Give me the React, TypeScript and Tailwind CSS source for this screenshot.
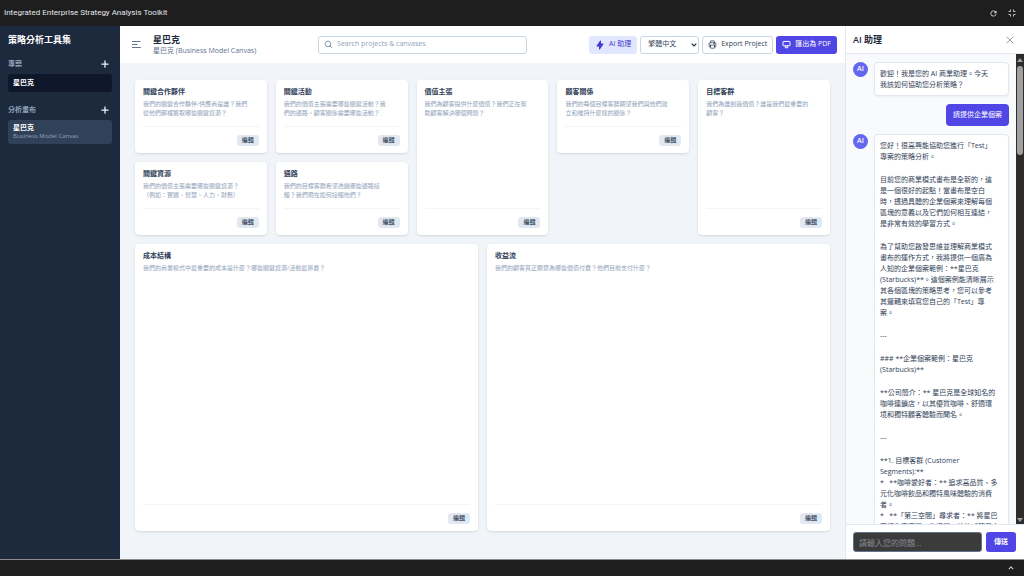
import { useState } from "react";
import { HiLightningBolt } from "react-icons/hi";
import {
  HiOutlineMagnifyingGlass,
  HiOutlinePlus,
  HiOutlinePrinter,
  HiOutlineXMark,
} from "react-icons/hi2";
import { MdKeyboardArrowUp, MdRefresh } from "react-icons/md";

type Block = { title: string; hint: string; span: string };

const BLOCKS: Block[] = [
  {
    title: "關鍵合作夥伴",
    hint: "我們的關鍵合作夥伴/供應商是誰？我們\n從他們那裡獲取哪些關鍵資源？",
    span: "col-span-2",
  },
  {
    title: "關鍵活動",
    hint: "我們的價值主張需要哪些關鍵活動？我\n們的通路、顧客關係需要哪些活動？",
    span: "col-span-2",
  },
  {
    title: "價值主張",
    hint: "我們為顧客提供什麼價值？我們正在幫\n助顧客解決哪個問題？",
    span: "col-span-2 row-span-2",
  },
  {
    title: "顧客關係",
    hint: "我們的每個目標客群期望我們與他們建\n立和維持什麼樣的關係？",
    span: "col-span-2",
  },
  {
    title: "目標客群",
    hint: "我們為誰創造價值？誰是我們最重要的\n顧客？",
    span: "col-span-2 row-span-2",
  },
  {
    title: "關鍵資源",
    hint: "我們的價值主張需要哪些關鍵資源？\n（例如：實體、智慧、人力、財務）",
    span: "col-span-2",
  },
  {
    title: "通路",
    hint: "我們的目標客群希望透過哪些通路接\n觸？我們現在如何接觸他們？",
    span: "col-span-2",
  },
  {
    title: "成本結構",
    hint: "我們的商業模式中最重要的成本是什麼？哪些關鍵資源/活動最昂貴？",
    span: "col-span-5",
  },
  {
    title: "收益流",
    hint: "我們的顧客真正願意為哪些價值付費？他們目前支付什麼？",
    span: "col-span-5",
  },
];

type Message = { role: "ai" | "user"; paragraphs: string[] };

const MESSAGES: Message[] = [
  {
    role: "ai",
    paragraphs: ["歡迎！我是您的 AI 商業助理。今天\n我該如何協助您分析策略？"],
  },
  { role: "user", paragraphs: ["請提供企業個案"] },
  {
    role: "ai",
    paragraphs: [
      "您好！很高興能協助您進行「Test」\n專案的策略分析。",
      "目前您的商業模式畫布是全新的，這\n是一個很好的起點！當畫布是空白\n時，透過具體的企業個案來理解每個\n區塊的意義以及它們如何相互連結，\n是非常有效的學習方式。",
      "為了幫助您啟發思維並理解商業模式\n畫布的運作方式，我將提供一個廣為\n人知的企業個案範例：**星巴克\n(Starbucks)**。這個案例能清晰展示\n其各個區塊的策略思考，您可以參考\n其邏輯來填寫您自己的「Test」專\n案。",
      "---",
      "### **企業個案範例：星巴克\n(Starbucks)**",
      "**公司簡介：** 星巴克是全球知名的\n咖啡連鎖店，以其優質咖啡、舒適環\n境和獨特顧客體驗而聞名。",
      "---",
      "**1. 目標客群 (Customer\nSegments):**\n*   **咖啡愛好者：** 追求高品質、多\n元化咖啡飲品和獨特風味體驗的消費\n者。\n*   **「第三空間」尋求者：** 將星巴\n克視為家庭和工作場所以外的「第三空",
    ],
  },
];

function SidebarHeading({ label }: { label: string }) {
  return (
    <div className="flex items-center justify-between pr-0.5">
      <h2 className="text-[7px] leading-3 font-semibold text-slate-400">{label}</h2>
      <button aria-label={`新增${label}`} className="text-slate-100">
        <HiOutlinePlus className="size-2.5" strokeWidth={3} />
      </button>
    </div>
  );
}

function CanvasCard({ block }: { block: Block }) {
  return (
    <section
      className={`flex flex-col rounded-sm bg-white px-2 pt-2 pb-[7px] shadow-sm ${block.span}`}
    >
      <h3 className="text-[7px] leading-2 font-bold text-slate-700">{block.title}</h3>
      <p className="mt-1 whitespace-pre-line text-[6px] leading-[9px] text-slate-400">
        {block.hint}
      </p>
      <div className="mt-auto flex justify-end border-t border-slate-100 pt-2">
        <button className="rounded-[3px] bg-slate-200 px-[5px] text-[6px] leading-[11px] font-semibold text-slate-600">
          編輯
        </button>
      </div>
    </section>
  );
}

function ChatMessage({ message }: { message: Message }) {
  if (message.role === "user") {
    return (
      <div className="flex justify-end">
        <div className="rounded-sm bg-[#4f46e5] px-[7px] py-[5px] text-[7px] leading-3 text-white">
          {message.paragraphs[0]}
        </div>
      </div>
    );
  }
  return (
    <div className="flex items-start gap-1.5">
      <div className="flex size-[15px] shrink-0 items-center justify-center rounded-full bg-[#6366f1] text-[7px] font-semibold text-white">
        AI
      </div>
      <div className="flex min-w-0 flex-1 flex-col gap-3 rounded-sm border border-slate-200 bg-white px-[5px] py-[5px] text-[7px] leading-[11px] text-slate-700 shadow-xs">
        {message.paragraphs.map((p, i) => (
          <p key={i} className="whitespace-pre-wrap">
            {p}
          </p>
        ))}
      </div>
    </div>
  );
}

export default function App() {
  const [query, setQuery] = useState("");
  const [lang, setLang] = useState("zh-TW");
  const [question, setQuestion] = useState("");

  return (
    <div className="flex h-screen flex-col overflow-hidden bg-[#1e1e1e] font-['Open_Sans','Noto_Sans_CJK_TC',sans-serif]">
      <div className="flex h-[26px] shrink-0 items-center justify-between pr-2 pl-1 text-gray-200">
        <div className="font-['Roboto',sans-serif] text-[8px]">
          Integrated Enterprise Strategy Analysis Toolkit
        </div>
        <div className="flex items-center gap-2.5">
          <button aria-label="Refresh">
            <MdRefresh className="size-[9px]" />
          </button>
          <button aria-label="Exit full screen">
            <svg viewBox="0 0 8 8" className="size-2" fill="none" stroke="currentColor">
              <path d="M2.5 0.5v2h-2M5.5 0.5v2h2M2.5 7.5v-2h-2M5.5 7.5v-2h2" strokeWidth="0.8" />
            </svg>
          </button>
        </div>
      </div>

      <div className="flex min-h-0 flex-1">
        <aside className="w-[120px] shrink-0 bg-slate-800 px-2 pt-2 text-white">
          <h1 className="text-[9px] leading-3 font-bold">策略分析工具集</h1>
          <div className="mt-3">
            <SidebarHeading label="專案" />
            <a
              href="#project"
              className="mt-1 block rounded-[3px] bg-slate-900 px-[5px] py-[3px] text-[7px] leading-3 font-semibold"
            >
              星巴克
            </a>
          </div>
          <div className="mt-3">
            <SidebarHeading label="分析畫布" />
            <a
              href="#canvas"
              className="mt-1 block rounded-[3px] bg-slate-700 px-[5px] py-[3px] text-[7px] leading-[9px]"
            >
              <div className="font-semibold">星巴克</div>
              <div className="text-[6px] text-slate-400">Business Model Canvas</div>
            </a>
          </div>
        </aside>

        <main className="flex min-w-0 flex-1 flex-col bg-slate-100">
          <header className="flex h-[37px] shrink-0 items-center justify-between bg-white pr-2 pl-3">
            <div className="flex items-center gap-3">
              <button aria-label="Toggle sidebar" className="text-slate-500">
                <svg viewBox="0 0 9 9" className="size-[9px]" fill="none" stroke="currentColor">
                  <path d="M0.5 1.5h7.5M0.5 4.5h4.5M0.5 7.5h8" strokeLinecap="round" />
                </svg>
              </button>
              <div>
                <h2 className="text-[9px] leading-3 font-bold text-slate-800">星巴克</h2>
                <p className="text-[7px] leading-[9px] text-slate-500">
                  星巴克 (Business Model Canvas)
                </p>
              </div>
            </div>

            <label className="flex h-[18px] w-[209px] items-center gap-1 rounded-[3px] border border-slate-300 px-[5px]">
              <HiOutlineMagnifyingGlass className="size-[9px] text-slate-500" strokeWidth={2} />
              <input
                type="search"
                aria-label="Search projects & canvases"
                placeholder="Search projects & canvases"
                value={query}
                onChange={(e) => setQuery(e.target.value)}
                className="min-w-0 flex-1 text-[7px] text-slate-700 outline-none placeholder:text-slate-400"
              />
            </label>

            <div className="flex items-center gap-[3px] text-[7px]">
              <button className="flex h-[18px] items-center gap-1 rounded-[3px] bg-[#e0e7ff] px-1.5 text-[#4338ca]">
                <HiLightningBolt className="size-2.5" />
                AI 助理
              </button>
              <div className="relative">
                <select
                  aria-label="語言"
                  value={lang}
                  onChange={(e) => setLang(e.target.value)}
                  className="block h-[18px] w-[59px] appearance-none rounded-[3px] border border-slate-300 bg-white pl-[7px] text-slate-700"
                >
                  <option value="zh-TW">繁體中文</option>
                  <option value="en">English</option>
                </select>
                <svg
                  viewBox="0 0 6 4"
                  className="pointer-events-none absolute top-[7px] right-0.5 h-1 w-1.5"
                  fill="none"
                  stroke="#1e293b"
                >
                  <path d="M0.7 0.7 3 3 5.3 0.7" strokeWidth="1.2" />
                </svg>
              </div>
              <button className="flex h-[18px] items-center gap-1 rounded-[3px] border border-slate-300 bg-white px-[5px] text-slate-700">
                <HiOutlinePrinter className="size-[9px]" strokeWidth={2} />
                Export Project
              </button>
              <button className="flex h-[18px] items-center gap-1 rounded-[3px] bg-[#4f46e5] px-1.5 text-white">
                <svg viewBox="0 0 9 9" className="size-[9px]" fill="none" stroke="currentColor">
                  <rect x="1" y="1.4" width="7" height="4.4" rx="0.6" />
                  <path d="M3.6 5.8v1.6M5.4 5.8v1.6M2.8 7.7h3.4" strokeWidth="0.9" />
                </svg>
                匯出為 PDF
              </button>
            </div>
          </header>

          <div className="grid min-h-0 flex-1 grid-cols-10 grid-rows-[73px_73px_1fr] gap-x-[9px] gap-y-[9px] px-[15px] pt-[17px] pb-7">
            {BLOCKS.map((block) => (
              <CanvasCard key={block.title} block={block} />
            ))}
          </div>
        </main>

        <aside className="flex w-[179px] shrink-0 flex-col border-l border-slate-200 bg-slate-50">
          <div className="flex h-7 shrink-0 items-center justify-between border-b border-slate-200 bg-white pr-2 pl-[7px]">
            <h2 className="text-[9px] font-semibold text-slate-800">AI 助理</h2>
            <button aria-label="關閉" className="text-slate-400">
              <HiOutlineXMark className="size-3" strokeWidth={2} />
            </button>
          </div>
          <div className="flex min-h-0 flex-1">
            <div className="flex min-w-0 flex-1 flex-col gap-2 overflow-hidden px-[7px] pt-2">
              {MESSAGES.map((m, i) => (
                <ChatMessage key={i} message={m} />
              ))}
            </div>
            <div className="flex w-2 shrink-0 flex-col items-center bg-[#2c2c2c] py-0.5 text-[#9f9f9f]">
              <svg viewBox="0 0 6 4" className="my-0.5 h-1 w-1.5" fill="currentColor">
                <path d="M3 0 6 4H0z" />
              </svg>
              <div className="mt-0.5 h-[89px] w-1.5 rounded-full bg-[#9f9f9f]" />
              <svg viewBox="0 0 6 4" className="mt-auto h-1 w-1.5" fill="currentColor">
                <path d="M0 0h6L3 4z" />
              </svg>
            </div>
          </div>
          <form
            onSubmit={(e) => e.preventDefault()}
            className="flex shrink-0 gap-1 border-t border-slate-200 bg-white py-[7px] pr-2 pl-[7px]"
          >
            <input
              aria-label="請輸入您的問題"
              placeholder="請輸入您的問題..."
              value={question}
              onChange={(e) => setQuestion(e.target.value)}
              className="h-5 min-w-0 flex-1 rounded-[3px] border border-slate-500 bg-[#3b3b3b] px-[5px] text-[8px] text-white placeholder:text-[#85898f]"
            />
            <button className="h-5 rounded-[3px] bg-[#4f46e5] px-2 text-[7px] font-semibold text-white">
              傳送
            </button>
          </form>
        </aside>
      </div>

      <div className="flex h-[17px] shrink-0 items-center justify-end border-t border-[#8a8a8a] pr-2 text-gray-200">
        <button aria-label="Expand">
          <MdKeyboardArrowUp className="size-2.5" />
        </button>
      </div>
    </div>
  );
}
